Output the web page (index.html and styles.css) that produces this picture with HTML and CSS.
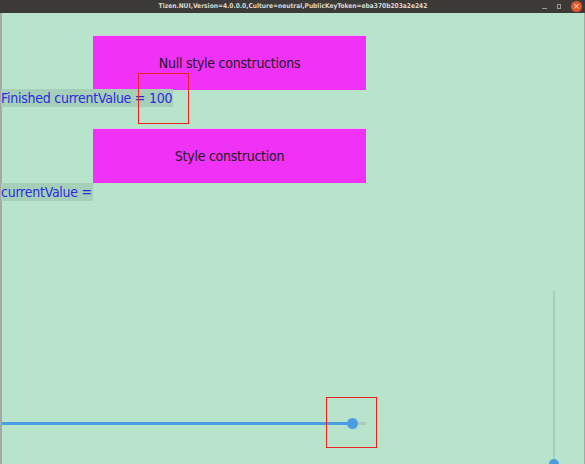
FILE: index.html
```html
<!DOCTYPE html>
<html>
<head>
<meta charset="utf-8">
<link rel="stylesheet" href="styles.css">
</head>
<body>
<div class="window">
  <div class="titlebar">
    <span class="title">Tizen.NUI,Version=4.0.0.0,Culture=neutral,PublicKeyToken=eba370b203a2e242</span>
    <div class="controls">
      <span class="ctl-min"></span>
      <span class="ctl-max"></span>
      <span class="ctl-close">×</span>
    </div>
  </div>
  <div class="canvas">
    <div class="button first">Null style constructions</div>
    <div class="label overlap">Finished currentValue = 100</div>
    <div class="button second">Style construction</div>
    <div class="label">currentValue =</div>

    <div class="debug-box box-a"></div>

    <div class="hslider">
      <div class="h-fill"></div>
      <div class="h-thumb"></div>
      <div class="h-rest"></div>
    </div>
    <div class="debug-box box-b"></div>

    <div class="vslider">
      <div class="v-thumb"></div>
    </div>
  </div>
</div>
</body>
</html>
```
FILE: styles.css
```css
html, body {
  margin: 0;
  padding: 0;
  width: 585px;
  height: 464px;
  overflow: hidden;
  background: #b7e4cb;
}
.window {
  width: 585px;
  height: 464px;
  display: flex;
  flex-direction: column;
}
.titlebar {
  height: 13px;
  background: #3b3a36;
  position: relative;
  display: flex;
  align-items: center;
  justify-content: center;
  flex-shrink: 0;
}
.title {
  font-family: "DejaVu Sans Condensed", "Liberation Sans", sans-serif;
  font-weight: bold;
  font-size: 6.6px;
  color: #dcd8cf;
  line-height: 13px;
  margin-left: 1px;
}
.controls {
  position: absolute;
  right: 3px;
  top: 0;
  height: 13px;
  display: flex;
  align-items: center;
  gap: 10px;
}
.ctl-min {
  width: 5px;
  height: 1px;
  background: #9a9890;
  margin-top: 3px;
}
.ctl-max {
  width: 4px;
  height: 5px;
  border: 1px solid #9a9890;
  box-sizing: border-box;
}
.ctl-close {
  width: 11px;
  height: 11px;
  border-radius: 50%;
  background: #e0592a;
  color: #f4d0c0;
  font-family: "DejaVu Sans", sans-serif;
  font-size: 9px;
  line-height: 11px;
  text-align: center;
}
.canvas {
  flex: 1;
  position: relative;
  border-left: 2px solid #a2aaa5;
  border-right: 1px solid #a2aaa5;
  display: flex;
  flex-direction: column;
  align-items: flex-start;
  padding-top: 23px;
  box-sizing: border-box;
}
.button {
  width: 273px;
  height: 54px;
  margin-left: 91px;
  background: #f032f6;
  color: #1e1a22;
  font-family: "DejaVu Sans Condensed", sans-serif;
  font-size: 14px;
  letter-spacing: -0.25px;
  display: flex;
  align-items: center;
  justify-content: center;
  box-shadow: 0 -1px 0 #d8c8e0;
}
.button.second {
  margin-top: 22px;
}
.label {
  background: #a6cfb8;
  color: #2b2be0;
  font-family: "DejaVu Sans Condensed", sans-serif;
  font-size: 14px;
  letter-spacing: -0.25px;
  height: 18px;
  line-height: 19px;
  padding-right: 1px;
  margin-left: -1px;
}
.label.overlap {
  margin-top: -1px;
}
.debug-box {
  position: absolute;
  width: 49px;
  height: 49px;
  border: 1px solid #ee2020;
}
.box-a {
  left: 136px;
  top: 60px;
}
.box-b {
  left: 324px;
  top: 384px;
}
.hslider {
  position: absolute;
  left: 0;
  top: 405px;
  width: 364px;
  height: 11px;
  display: flex;
  align-items: center;
}
.h-fill {
  width: 345px;
  height: 3px;
  background: #4b9de3;
}
.h-thumb {
  width: 11px;
  height: 11px;
  border-radius: 50%;
  background: #4b9de3;
  flex-shrink: 0;
}
.h-rest {
  flex: 1;
  height: 3px;
  background: #a9cdb9;
}
.vslider {
  position: absolute;
  left: 551px;
  top: 278px;
  width: 2px;
  height: 173px;
  background: #a9cdb9;
}
.v-thumb {
  position: absolute;
  left: -4px;
  bottom: -5px;
  width: 10px;
  height: 10px;
  border-radius: 50%;
  background: #4b9de3;
}
```
